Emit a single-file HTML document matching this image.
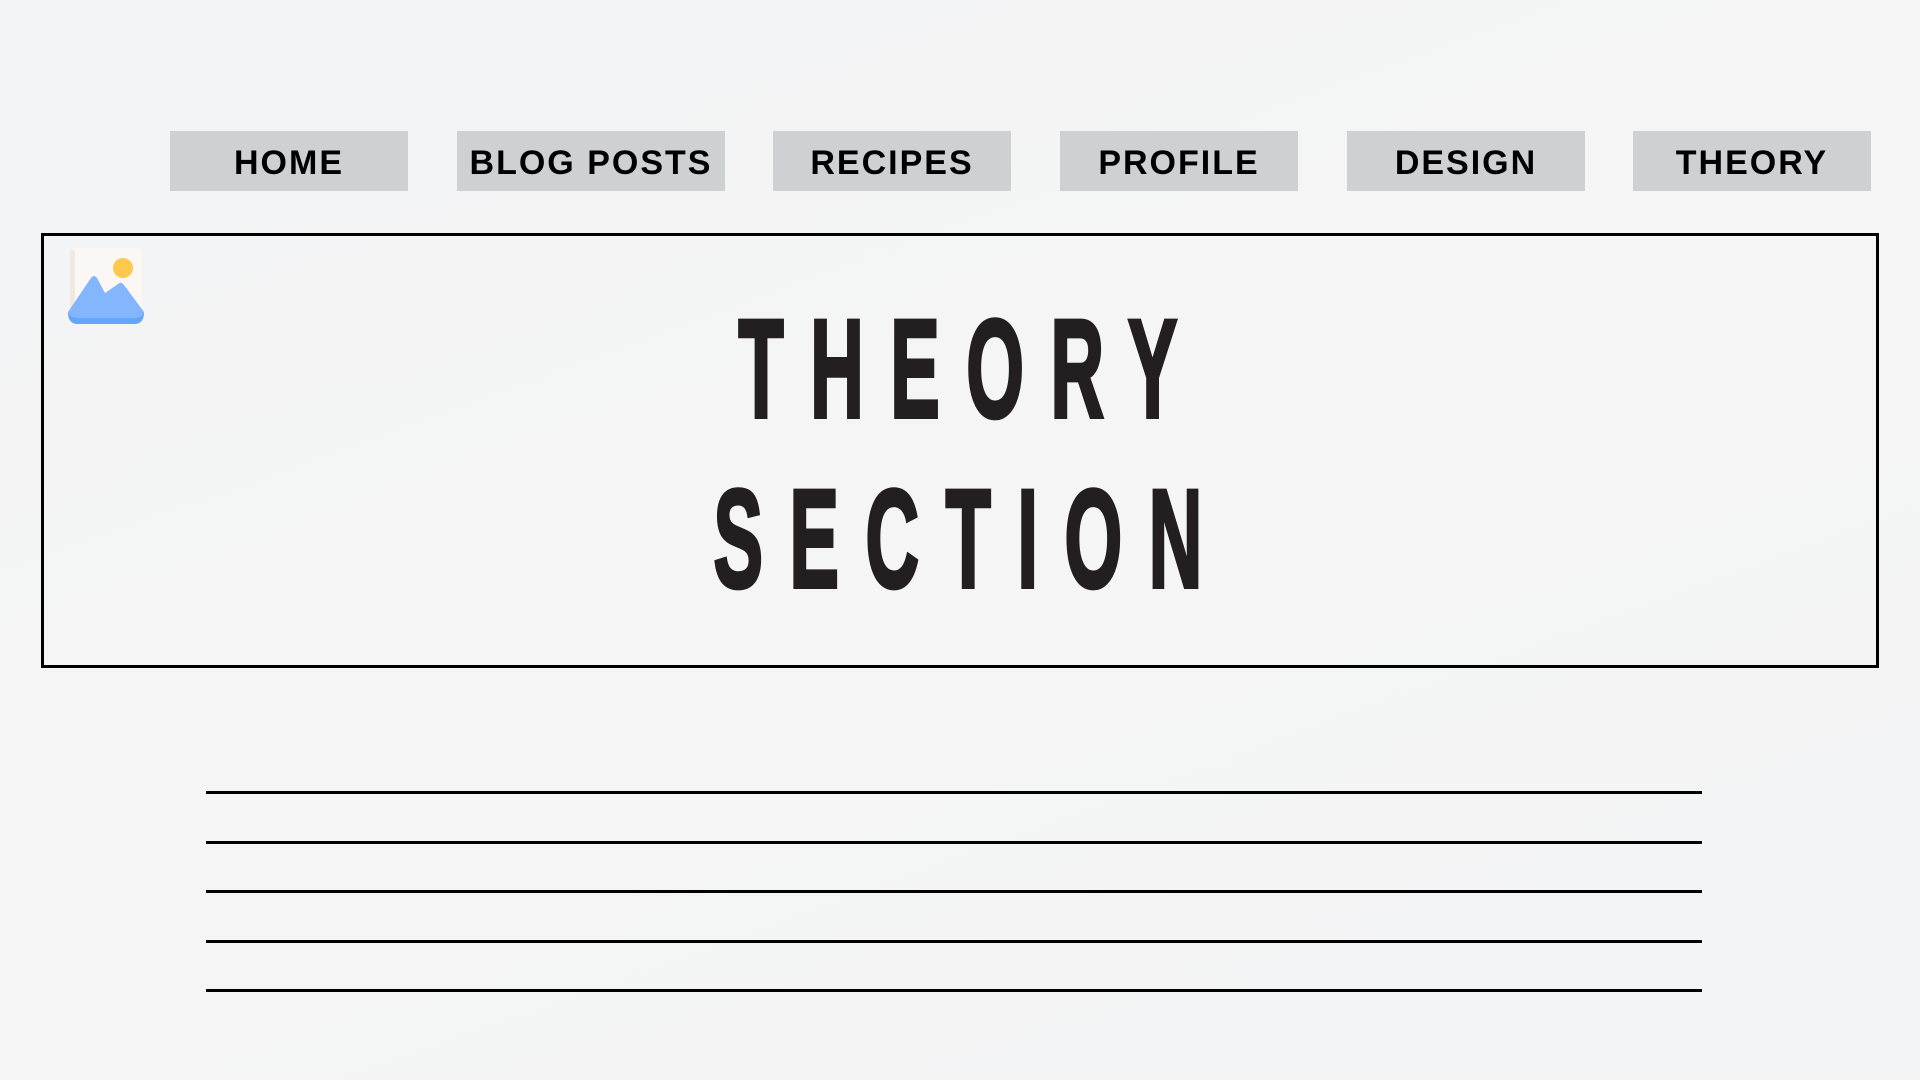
<!DOCTYPE html>
<html><head><meta charset="utf-8"><style>
html,body{margin:0;padding:0}
body{width:1920px;height:1080px;position:relative;background:linear-gradient(160deg,#f3f4f6,#f4f5f4 50%,#f3f4f6);overflow:hidden;font-family:"Liberation Sans",sans-serif}
.nav{position:absolute;top:131px;height:60px;box-sizing:border-box;padding-top:4px;background:#cfd0d2;display:flex;align-items:center;justify-content:center;font-weight:bold;font-size:34px;letter-spacing:2px;color:#000}
.box{position:absolute;left:41px;top:233px;width:1832px;height:429px;border:3px solid #000}
.t{position:absolute;left:-14px;width:1920px;text-align:center;font-family:"Liberation Sans",sans-serif;font-weight:bold;font-size:140px;line-height:1;color:#231f20}
.t span{display:inline-block;letter-spacing:50px;margin-right:-50px;transform:scaleX(0.53);transform-origin:center;-webkit-text-stroke:4px #231f20}
.l{position:absolute;left:206px;width:1496px;height:3px;background:#000}
</style></head><body>
<div class="nav" style="left:170px;width:238px">HOME</div>
<div class="nav" style="left:457px;width:268px">BLOG POSTS</div>
<div class="nav" style="left:773px;width:238px">RECIPES</div>
<div class="nav" style="left:1060px;width:238px">PROFILE</div>
<div class="nav" style="left:1347px;width:238px">DESIGN</div>
<div class="nav" style="left:1633px;width:238px">THEORY</div>
<div class="box"></div>
<svg style="position:absolute;left:68px;top:248px" width="76" height="76" viewBox="0 0 76 76">
<rect x="2" y="0" width="72" height="72" rx="8" fill="#faf7f4"/>
<rect x="2" y="2" width="5" height="66" fill="#efe8e3"/>
<circle cx="55" cy="20" r="10" fill="#ffc84f"/>
<path d="M0 64 L23 30 Q26 26 29 30 L37 45 L50 36 Q53 33 56 37 L76 64 Q76 76 66 76 L10 76 Q0 76 0 64Z" fill="#84b6fd"/>
<path d="M0 64 Q2 70 10 70 L66 70 Q74 70 76 64 Q76 76 66 76 L10 76 Q0 76 0 64Z" fill="#64a6fe"/>
</svg>
<div class="t" style="top:299px"><span>THEORY</span></div>
<div class="t" style="top:469px"><span>SECTION</span></div>
<div class="l" style="top:791px"></div>
<div class="l" style="top:841px"></div>
<div class="l" style="top:890px"></div>
<div class="l" style="top:940px"></div>
<div class="l" style="top:989px"></div>
</body></html>
